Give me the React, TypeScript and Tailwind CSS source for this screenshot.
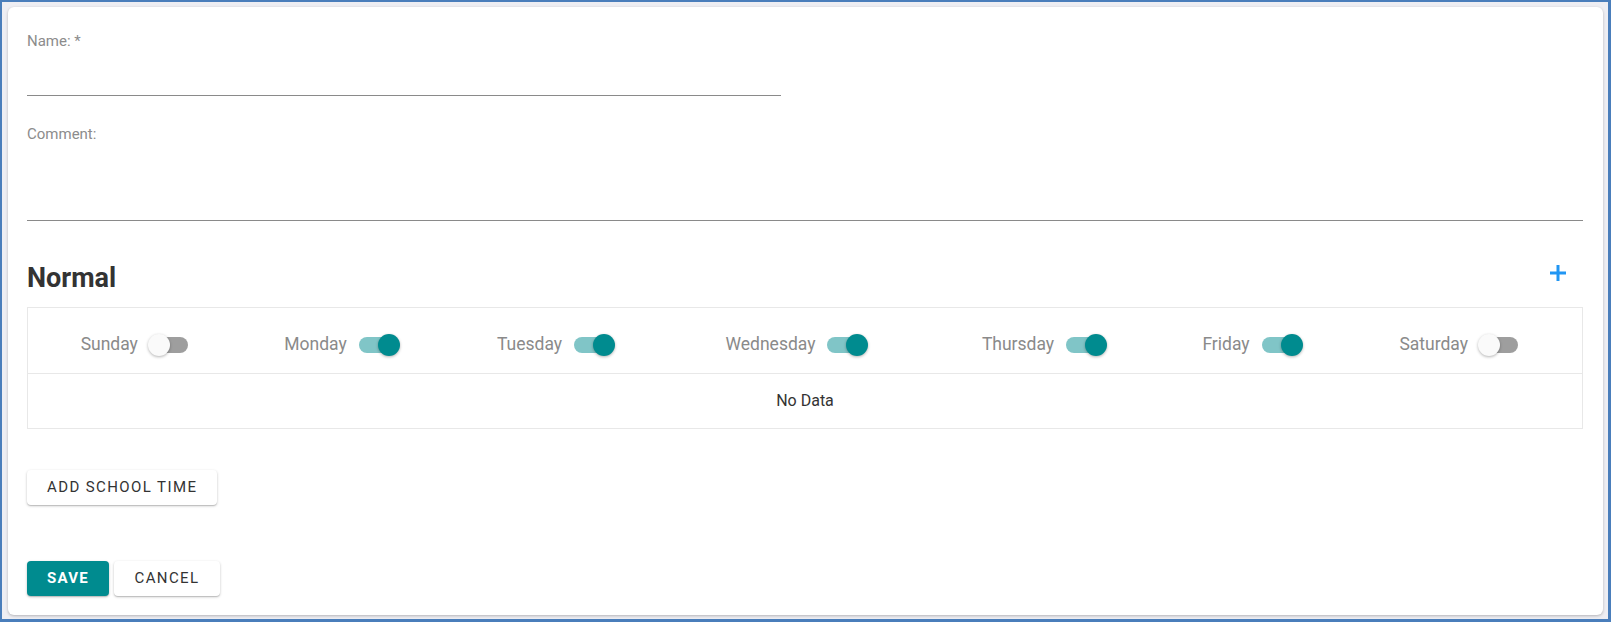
import { useState } from 'react';

type Day = { name: string; on: boolean };

const initialDays: Day[] = [
  { name: 'Sunday', on: false },
  { name: 'Monday', on: true },
  { name: 'Tuesday', on: true },
  { name: 'Wednesday', on: true },
  { name: 'Thursday', on: true },
  { name: 'Friday', on: true },
  { name: 'Saturday', on: false },
];

function Toggle({ on, onClick }: { on: boolean; onClick: () => void }) {
  return (
    <button
      type="button"
      onClick={onClick}
      className="relative ml-[10px] inline-block h-[22px] w-[43px] shrink-0 cursor-pointer"
    >
      <span
        className={`absolute left-[2px] top-[3px] h-[16px] w-[38px] rounded-full ${
          on ? 'bg-[#80c5c7]' : 'bg-[#9e9e9e]'
        }`}
      />
      <span
        className={`absolute top-0 h-[22px] w-[22px] rounded-full shadow-[0_1px_3px_rgba(0,0,0,0.3)] ${
          on ? 'left-[21px] bg-[#008b8f]' : 'left-0 bg-[#fafafa]'
        }`}
      />
    </button>
  );
}

function App() {
  const [days, setDays] = useState<Day[]>(initialDays);
  const [name, setName] = useState('');
  const [comment, setComment] = useState('');

  const toggleDay = (i: number) =>
    setDays((prev) => prev.map((d, j) => (j === i ? { ...d, on: !d.on } : d)));

  return (
    <div className="flex h-[622px] w-full border-solid border-[#4a7ebb] border-l-2 border-t-2 border-r-[3px] border-b-[3px] bg-[#eeeef3] pl-[6px] pt-[5px] pr-[5px] pb-[4px] font-['Roboto',sans-serif]">
      <div className="flex flex-1 flex-col rounded-md bg-white pl-[19px] pr-[20px] pt-[25px] shadow-[0_1px_3px_rgba(0,0,0,0.25)]">
        {/* Name */}
        <label className="block h-[18px] text-[15px] leading-[18px] text-[#8c8c8c]">Name: *</label>
        <input
          value={name}
          onChange={(e) => setName(e.target.value)}
          className="block h-[46px] w-[754px] border-b border-[#8a8a8a] text-[16px] text-[#333] outline-none"
        />

        {/* Comment */}
        <label className="mt-[29px] block h-[18px] text-[15px] leading-[18px] text-[#8c8c8c]">Comment:</label>
        <textarea
          value={comment}
          onChange={(e) => setComment(e.target.value)}
          className="block h-[78px] w-full resize-none border-b border-[#8a8a8a] text-[16px] text-[#333] outline-none"
        />

        {/* Normal section */}
        <div className="mt-[41px] flex items-start justify-between">
          <h2 className="text-[27px] font-bold leading-[32px] text-[#333]">Normal</h2>
          <button type="button" className="mr-[17px] mt-[3px]">
            <svg width="16" height="16" viewBox="0 0 16 16">
              <rect x="6.5" y="0" width="3" height="16" fill="#2196f3" />
              <rect x="0" y="6.5" width="16" height="3" fill="#2196f3" />
            </svg>
          </button>
        </div>

        <table className="mt-[13px] w-full table-fixed border-collapse border border-[#e8e8e8]">
          <colgroup>
            <col className="w-[216px]" />
            <col className="w-[197px]" />
            <col className="w-[231px]" />
            <col className="w-[251px]" />
            <col className="w-[244px]" />
            <col className="w-[172px]" />
            <col />
          </colgroup>
          <tbody>
            <tr className="border-b border-[#e8e8e8]">
              {days.map((d, i) => (
                <td key={d.name} className="p-0">
                  <div className="flex h-[65px] items-center justify-center pt-[8px]">
                    <span className="text-[17.5px] text-[#8a8a8a]">{d.name}</span>
                    <Toggle on={d.on} onClick={() => toggleDay(i)} />
                  </div>
                </td>
              ))}
            </tr>
            <tr>
              <td colSpan={7} className="h-[55px] text-center text-[16px] text-[#333]">
                No Data
              </td>
            </tr>
          </tbody>
        </table>

        <div className="mt-[41px]">
          <button
            type="button"
            className="h-[35px] rounded px-[20px] text-[15px] font-normal tracking-[1.4px] text-[#333] shadow-[0_1px_3px_rgba(0,0,0,0.2),0_1px_1px_rgba(0,0,0,0.14)]"
          >
            ADD SCHOOL TIME
          </button>
        </div>

        <div className="mt-[56px] flex gap-[5px]">
          <button
            type="button"
            className="h-[35px] w-[82px] rounded bg-[#008b8f] text-[15px] font-bold tracking-[1.3px] text-white shadow-[0_1px_3px_rgba(0,0,0,0.2),0_1px_1px_rgba(0,0,0,0.14)]"
          >
            SAVE
          </button>
          <button
            type="button"
            className="h-[35px] w-[106px] rounded text-[15px] font-normal tracking-[1.4px] text-[#333] shadow-[0_1px_3px_rgba(0,0,0,0.2),0_1px_1px_rgba(0,0,0,0.14)]"
          >
            CANCEL
          </button>
        </div>
      </div>
    </div>
  );
}

export default App;
